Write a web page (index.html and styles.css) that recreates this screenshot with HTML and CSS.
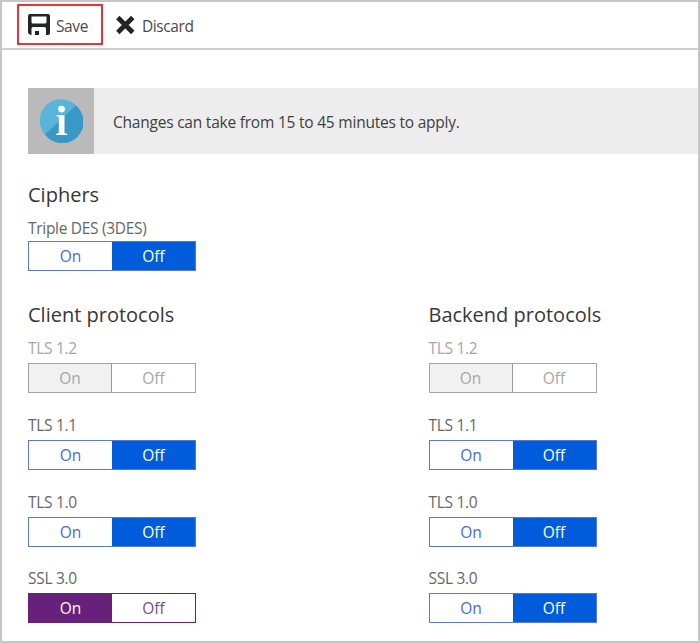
FILE: index.html
```
<!DOCTYPE html>
<html lang="en">
<head>
<meta charset="utf-8">
<title>Protocol settings</title>
<link rel="stylesheet" href="styles.css">
</head>
<body>
<main class="blade">
  <header class="toolbar">
    <button class="command save">
      <svg width="22" height="22" viewBox="0 0 22 22"><path fill="#222526" d="M2 0H20Q22 0 22 2V19Q22 21 20 21H18V14.500Q18 13 16.500 13H5Q3.500 13 3.500 14.500V21H2.500L0 19V2Q0 0 2 0ZM3.500 2.500V8Q3.500 9.500 5 9.500H17Q18.500 9.500 18.500 8V2.500Z" fill-rule="evenodd"/><path fill="#222526" d="M7 17h4v4H7z"/></svg>
      <span class="save-text">Save</span>
    </button>
    <button class="command discard">
      <svg width="20" height="20" viewBox="0 0 20 20"><path d="M2.800 2.500 17.800 17.500M17.800 2.500 2.800 17.500" stroke="#222526" stroke-width="4.800"/></svg>
      <span class="discard-text">Discard</span>
    </button>
  </header>
  <div class="content">
    <div class="notice">
      <div class="notice-icon">
        <svg width="44" height="44" viewBox="0 0.500 44 44"><circle cx="22" cy="22" r="21.300" fill="#59b4d9"/><path d="M36.800 7A21.300 21.300 0 1 1 6 35.900Z" fill="#3999c6"/><circle cx="22.500" cy="10.600" r="3.400" fill="#fff"/><path d="M17.500 16.500H25.500V34.500L28.300 35.500V36.500H17V35.500L19.800 34.500V18.500L17.500 17.500Z" fill="#fff"/></svg>
      </div>
      <p class="notice-text">Changes can take from 15 to 45 minutes to apply.</p>
    </div>
    <section class="ciphers">
      <h2>Ciphers</h2>
      <div class="field"><span class="label triple">Triple DES (3DES)</span><div class="toggle"><span>On</span><span class="selected">Off</span></div></div>
    </section>
    <div class="protocols">
      <section>
        <h2>Client protocols</h2>
        <div class="field disabled"><span class="label">TLS 1.2</span><div class="toggle"><span class="selected">On</span><span>Off</span></div></div>
        <div class="field"><span class="label">TLS 1.1</span><div class="toggle"><span>On</span><span class="selected">Off</span></div></div>
        <div class="field"><span class="label">TLS 1.0</span><div class="toggle"><span>On</span><span class="selected">Off</span></div></div>
        <div class="field changed"><span class="label">SSL 3.0</span><div class="toggle"><span class="selected">On</span><span>Off</span></div></div>
      </section>
      <section>
        <h2>Backend protocols</h2>
        <div class="field disabled"><span class="label">TLS 1.2</span><div class="toggle"><span class="selected">On</span><span>Off</span></div></div>
        <div class="field"><span class="label">TLS 1.1</span><div class="toggle"><span>On</span><span class="selected">Off</span></div></div>
        <div class="field"><span class="label">TLS 1.0</span><div class="toggle"><span>On</span><span class="selected">Off</span></div></div>
        <div class="field"><span class="label">SSL 3.0</span><div class="toggle"><span>On</span><span class="selected">Off</span></div></div>
      </section>
    </div>
  </div>
</main>
</body>
</html>
```
FILE: styles.css
```
* { box-sizing: border-box; }
body { margin: 0; font-family: "Open Sans", "Noto Sans", sans-serif; font-size: 15.500px; color: #404040; }
.blade { height: 643px; border: 2px solid #c6c6c6; background: #fff; overflow: hidden; }
.toolbar { display: flex; height: 48px; padding: 2px 0 0 15px; border-bottom: 2px solid #cecece; }
.command { display: flex; align-items: center; height: 41px; padding: 0; border: 0; background: none; font: inherit; color: #4a4a4a; white-space: nowrap; }
.save { width: 86px; padding-left: 9px; gap: 6px; border: 2px solid #ee3038; }
.discard { padding-left: 12px; gap: 7px; }
.command span { padding-top: 2px; }
.save-text { letter-spacing: -0.4px; }
.discard-text { letter-spacing: -0.4px; }
.content { padding: 38px 0 0 26px; }
.notice { display: flex; align-items: center; height: 66px; background: #ededed; }
.notice-icon { display: flex; align-items: center; justify-content: center; width: 66px; height: 66px; background: #bababa; }
.notice-text { margin: 1px 0 0 19px; letter-spacing: -0.22px; white-space: nowrap; }
h2 { margin: 0; height: 34px; font-size: 20px; line-height: 36px; font-weight: 400; color: #383838; white-space: nowrap; }
.ciphers { height: 120px; margin-top: 23px; }
.ciphers .label { height: 30px; }
.protocols { display: grid; grid-template-columns: 400.500px 1fr; }
.field { height: 76.800px; color: #666; }
.label { display: block; height: 32px; line-height: 35px; letter-spacing: -0.3px; white-space: nowrap; }
.toggle { display: grid; grid-template-columns: 1fr 1fr; width: 168px; height: 30px; border: 1px solid #5878d8; line-height: 29px; text-align: center; color: #466cd9; }
.toggle span { height: 28px; }
.toggle .selected { background: #005cdb; color: #fff; }
.disabled { color: #a6a6a6; }
.disabled .toggle { border-color: #a4a4a4; color: #a6a6a6; }
.disabled .selected { background: #f1f1f1; color: #a6a6a6; border-right: 1px solid #999; }
.changed .toggle { border-color: #68217a; color: #754c8a; }
.changed .selected { background: #68217a; color: #fff; }
```
